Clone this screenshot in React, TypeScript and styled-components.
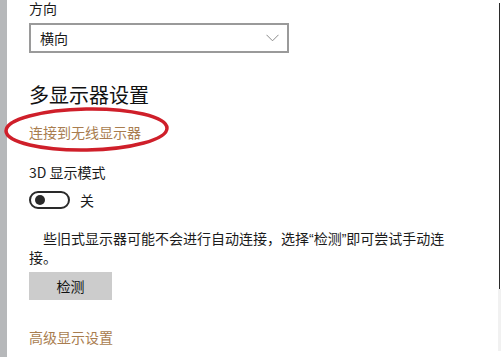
import React from "react";
import styled, { createGlobalStyle } from "styled-components";

const Global = createGlobalStyle`
  html, body { margin: 0; padding: 0; background: #fff; }
  body { width: 503px; height: 357px; overflow: hidden; }
  * { box-sizing: border-box; }
`;

const Page = styled.div`
  position: relative;
  display: flex;
  width: 503px;
  height: 357px;
  overflow: hidden;
  background: #fff;
  font-family: "Noto Sans CJK SC", "Microsoft YaHei", sans-serif;
  color: #1b1b1b;
`;

const SideStrip = styled.div`
  width: 7px;
  flex: none;
  background: #b6b8ba;
`;

const Content = styled.div`
  flex: 1;
  display: flex;
  flex-direction: column;
  align-items: flex-start;
  padding-left: 22px;
`;

const Label = styled.div<{ $mt?: number; $lh?: number }>`
  font-size: 14px;
  line-height: ${(p) => p.$lh ?? 20}px;
  height: ${(p) => p.$lh ?? 20}px;
  margin-top: ${(p) => p.$mt ?? 0}px;
  color: #1b1b1b;
`;

const Select = styled.div`
  margin-top: 6px;
  width: 260px;
  height: 30px;
  border: 2px solid #9a9a9a;
  display: flex;
  align-items: center;
  justify-content: space-between;
  padding: 0 8px 0 9px;
  font-size: 14px;
  color: #1b1b1b;
`;

const Heading = styled.div`
  margin-top: 28px;
  font-size: 20px;
  line-height: 28px;
  height: 28px;
  color: #111;
`;

const Link = styled.div<{ $mt: number }>`
  margin-top: ${(p) => p.$mt}px;
  font-size: 14px;
  line-height: 20px;
  height: 20px;
  color: #a97d4f;
`;

const ToggleRow = styled.div`
  margin-top: 8px;
  display: flex;
  align-items: center;
  gap: 10px;
  height: 19px;
  font-size: 14px;
`;

const Toggle = styled.div`
  width: 41px;
  height: 18px;
  border: 2px solid #2a2a2a;
  border-radius: 9px;
  display: flex;
  align-items: center;
  padding-left: 4px;
`;

const Knob = styled.div`
  width: 10px;
  height: 10px;
  border-radius: 50%;
  background: #2a2a2a;
`;

const Paragraph = styled.p`
  margin: 21px 0 0;
  width: 428px;
  font-family: "Liberation Sans", "Noto Sans CJK SC", sans-serif;
  font-size: 14px;
  line-height: 19px;
  text-indent: 14px;
  color: #1b1b1b;
`;

const Button = styled.div`
  margin-top: 4px;
  width: 83px;
  height: 28px;
  background: #cccccc;
  display: flex;
  align-items: center;
  justify-content: center;
  font-size: 14px;
  color: #111;
`;

const Scrollbar = styled.div`
  position: absolute;
  left: 499px;
  top: 3px;
  width: 1px;
  height: 286px;
  background: #2b2b2b;
`;

const ScrollTrack = styled.div`
  position: absolute;
  left: 498px;
  top: 289px;
  width: 3px;
  height: 62px;
  background: #f1f1f1;
`;

const Annotation = styled.svg`
  position: absolute;
  left: 0;
  top: 100px;
  pointer-events: none;
`;

export default function App() {
  return (
    <>
      <Global />
      <Page>
        <SideStrip />
        <Content>
          <Label $mt={0} $lh={17}>方向</Label>
          <Select>
            <span>横向</span>
            <svg width="13" height="8" viewBox="0 0 13 8">
              <path d="M0.5 0.8 L6.5 6.8 L12.5 0.8" fill="none" stroke="#8a8a8a" strokeWidth="1" />
            </svg>
          </Select>
          <Heading>多显示器设置</Heading>
          <Link $mt={13}>连接到无线显示器</Link>
          <Label $mt={20}>3D 显示模式</Label>
          <ToggleRow>
            <Toggle>
              <Knob />
            </Toggle>
            <span>关</span>
          </ToggleRow>
          <Paragraph>些旧式显示器可能不会进行自动连接，选择“检测”即可尝试手动连接。</Paragraph>
          <Button>检测</Button>
          <Link $mt={27}>高级显示设置</Link>
        </Content>
        <Scrollbar />
        <ScrollTrack />
        <Annotation width="180" height="60" viewBox="0 0 180 60">
          <ellipse cx="86.5" cy="29.5" rx="80.5" ry="20.5" fill="none" stroke="#cf1f2a" strokeWidth="3.5" transform="rotate(-1 86.5 29.5)" />
        </Annotation>
      </Page>
    </>
  );
}
